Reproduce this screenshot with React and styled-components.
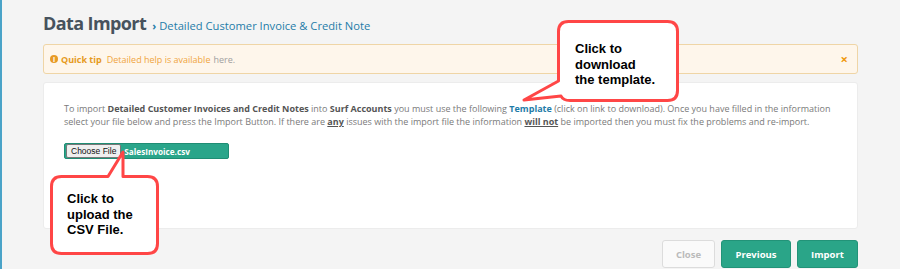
import React from 'react'
import styled, { createGlobalStyle } from 'styled-components'

const GlobalStyle = createGlobalStyle`
  html, body {
    margin: 0;
    padding: 0;
    background: #f4f4f4;
  }
  body {
    font-family: "Open Sans", "Liberation Sans", sans-serif;
  }
`;

const Page = styled.div`
  position: relative;
  width: 900px;
  height: 269px;
  box-sizing: border-box;
  border-left: 2px solid #4aa3c8;
  padding: 9px 42px 0 41px;
  overflow: hidden;
`;

const Header = styled.div`
  display: flex;
  align-items: baseline;
  gap: 6px;
  height: 28px;
  line-height: 28px;
`;

const Title = styled.h1`
  margin: 0;
  font-size: 18px;
  font-weight: 700;
  color: #47525d;
  letter-spacing: -0.6px;
`;

const Crumb = styled.span`
  font-size: 11.2px;
  color: #1f7ca8;
  span {
    font-weight: 700;
    margin-right: 3px;
  }
`;

const Alert = styled.div`
  margin-top: 7px;
  height: 28px;
  display: flex;
  align-items: center;
  padding: 0 9px 0 6px;
  background: #fef6eb;
  border: 1px solid #efd5a6;
  border-radius: 3px;
  font-size: 9px;
  color: #f0a540;
`;

const InfoIcon = styled.span`
  display: inline-flex;
  align-items: center;
  justify-content: center;
  width: 8px;
  height: 8px;
  border-radius: 50%;
  background: #e89a25;
  color: #fff;
  font-size: 7px;
  font-weight: 700;
  margin-right: 3px;
  line-height: 1;
`;

const TipLabel = styled.b`
  color: #e69a22;
  margin-right: 5px;
`;

const Muted = styled.span`
  color: #a0a0a0;
  margin-left: 3px;
`;

const CloseX = styled.span`
  margin-left: auto;
  color: #f09a10;
  font-size: 13px;
  font-weight: 700;
`;

const Panel = styled.div`
  margin-top: 8px;
  background: #fff;
  border: 1px solid #ececec;
  border-radius: 3px;
  padding: 19px 20px 69px 20px;
`;

const Intro = styled.p`
  margin: 0;
  font-size: 9px;
  line-height: 13px;
  color: #7a7a7a;
  b { color: #555; }
  u { color: #555; font-weight: 700; }
`;

const TemplateLink = styled.a`
  color: #1f7ca8;
  font-weight: 700;
  text-decoration: none;
`;

const FileBox = styled.div`
  margin-top: 15px;
  width: 165px;
  height: 16px;
  box-sizing: border-box;
  display: flex;
  align-items: center;
  gap: 3px;
  padding: 0 1px;
  background: #2aa58a;
  border: 1px solid #1f8d74;
  border-radius: 2px;
`;

const ChooseButton = styled.span`
  flex-shrink: 0;
  white-space: nowrap;
  height: 14px;
  box-sizing: border-box;
  display: flex;
  align-items: center;
  padding: 0 4px;
  background: #efefef;
  border: 1px solid #777;
  border-radius: 2px;
  font-family: "Liberation Sans", Arial, sans-serif;
  font-size: 8.5px;
  color: #111;
`;

const FileName = styled.span`
  white-space: nowrap;
  font-size: 8.2px;
  font-weight: 700;
  color: #fff;
`;

const Footer = styled.div`
  margin-top: 11px;
  display: flex;
  justify-content: flex-end;
  gap: 6px;
`;

const Button = styled.button`
  height: 28px;
  width: ${p => p.$w}px;
  padding: 0;
  border-radius: 3px;
  font-family: "Open Sans", sans-serif;
  font-size: 9.5px;
  font-weight: 700;
  cursor: pointer;
  background: ${p => (p.$primary ? '#2aa588' : '#fafafa')};
  color: ${p => (p.$primary ? '#fff' : '#bbb')};
  border: 1px solid ${p => (p.$primary ? '#229378' : '#dcdcdc')};
`;

const Callout = styled.div`
  position: absolute;
  left: ${p => p.$x}px;
  top: ${p => p.$y}px;
  width: ${p => p.$w}px;
  height: ${p => p.$h}px;
  pointer-events: none;
  svg {
    position: absolute;
    left: 0;
    top: 0;
    overflow: visible;
  }
`;

const CalloutText = styled.div`
  position: absolute;
  left: ${p => p.$tx}px;
  top: ${p => p.$ty}px;
  font-family: "Liberation Sans", Arial, sans-serif;
  font-weight: 700;
  font-size: 13px;
  line-height: 15.5px;
  color: #000;
  white-space: nowrap;
`;

function Bubble({ x, y, w, h, d, tx, ty, lines }) {
  return (
    <Callout $x={x} $y={y} $w={w} $h={h}>
      <svg width={w} height={h} viewBox={`${x} ${y} ${w} ${h}`}>
        <path d={d} fill="#fff" stroke="#ff4646" strokeWidth="3" strokeLinejoin="round" />
      </svg>
      <CalloutText $tx={tx - x} $ty={ty - y}>
        {lines.map(l => <div key={l}>{l}</div>)}
      </CalloutText>
    </Callout>
  );
}

export default function App() {
  return (
    <>
      <GlobalStyle />
      <Page>
        <Header>
          <Title>Data Import</Title>
          <Crumb><span>›</span>Detailed Customer Invoice &amp; Credit Note</Crumb>
        </Header>

        <Alert>
          <InfoIcon>i</InfoIcon>
          <TipLabel>Quick tip</TipLabel>
          Detailed help is available <Muted>here.</Muted>
          <CloseX>×</CloseX>
        </Alert>

        <Panel>
          <Intro>
            To import <b>Detailed Customer Invoices and Credit Notes</b> into <b>Surf Accounts</b> you must use the following <TemplateLink href="#">Template</TemplateLink> (click on link to download). Once you have filled in the information select your file below and press the Import Button. If there are <u>any</u> issues with the import file the information <u>will not</u> be imported then you must fix the problems and re-import.
          </Intro>
          <FileBox>
            <ChooseButton>Choose File</ChooseButton>
            <FileName>SalesInvoice.csv</FileName>
          </FileBox>
        </Panel>

        <Footer>
          <Button $w={53}>Close</Button>
          <Button $primary $w={70}>Previous</Button>
          <Button $primary $w={61}>Import</Button>
        </Footer>

        <Bubble
          x={518} y={18} w={162} h={86}
          d="M 566.5 21.5 H 665.5 Q 675.5 21.5 675.5 31.5 V 90.5 Q 675.5 100.5 665.5 100.5 H 568 Q 561 100.5 559 96 L 522 100 L 556.5 81 V 31.5 Q 556.5 21.5 566.5 21.5 Z"
          tx={573} ty={41}
          lines={['Click to', 'download', 'the template.']}
        />
        <Bubble
          x={46} y={146} w={114} h={112}
          d="M 59.5 176.5 H 106 L 121 152 L 121 176.5 H 145.5 Q 155.5 176.5 155.5 186.5 V 243.5 Q 155.5 253.5 145.5 253.5 H 59.5 Q 49.5 253.5 49.5 243.5 V 186.5 Q 49.5 176.5 59.5 176.5 Z"
          tx={65} ty={191}
          lines={['Click to', 'upload the', 'CSV File.']}
        />
      </Page>
    </>
  );
}
